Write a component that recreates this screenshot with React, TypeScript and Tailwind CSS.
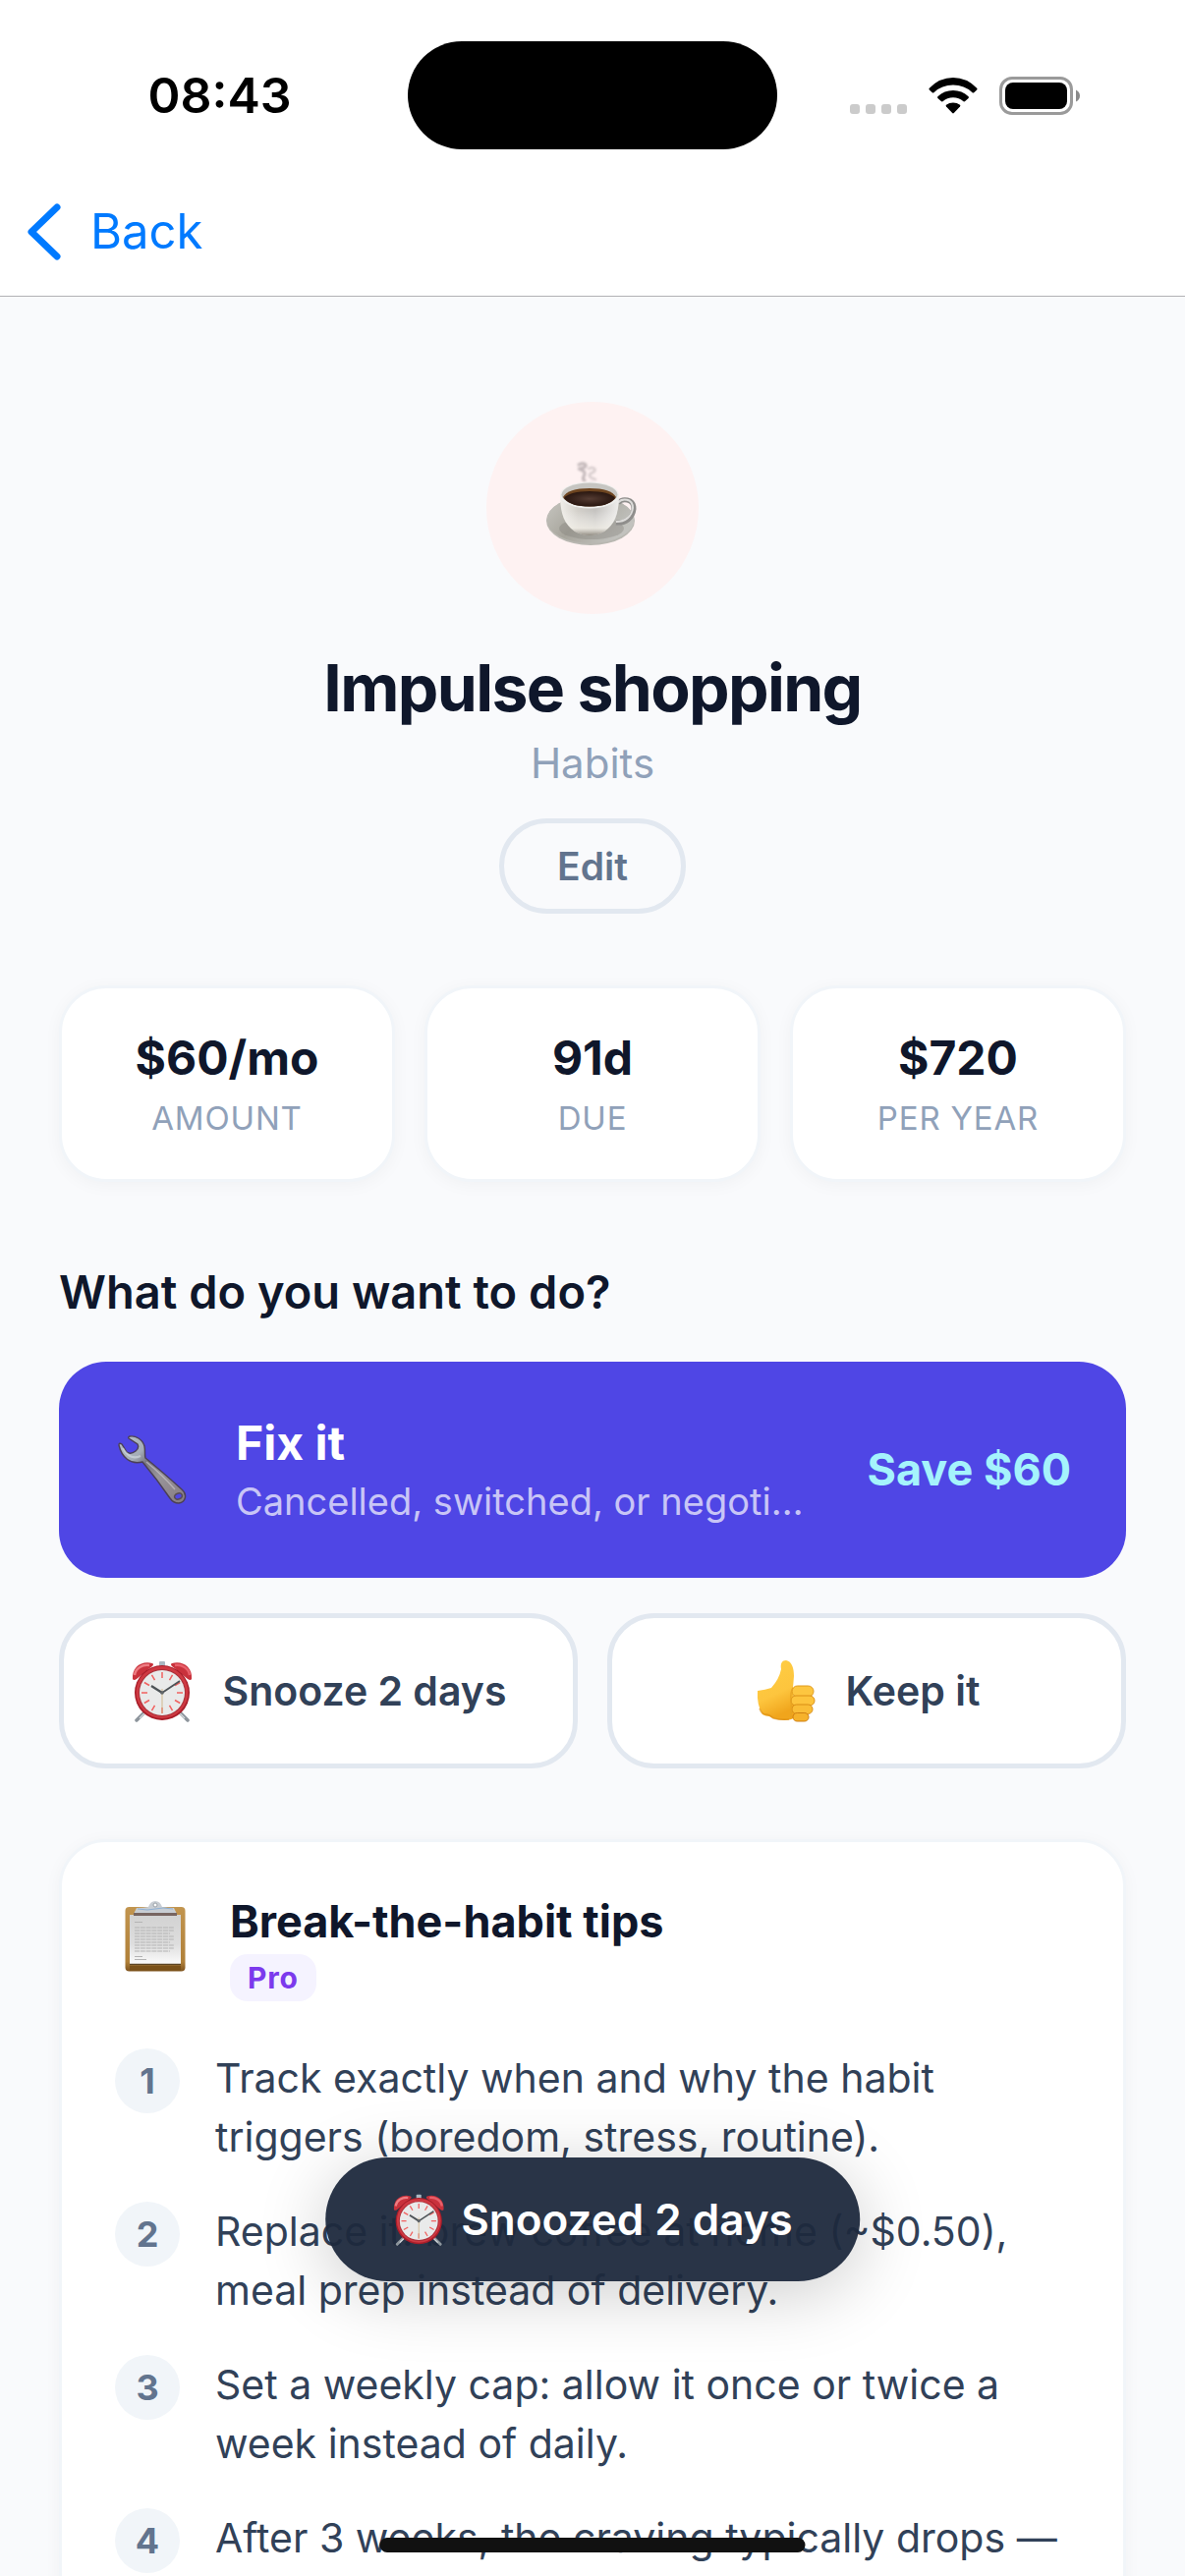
import React from "react";

const stats = [
  { value: "$60/mo", label: "AMOUNT" },
  { value: "91d", label: "DUE" },
  { value: "$720", label: "PER YEAR" },
];

const tips = [
  "Track exactly when and why the habit triggers (boredom, stress, routine).",
  "Replace it: brew coffee at home (~$0.50), meal prep instead of delivery.",
  "Set a weekly cap: allow it once or twice a week instead of daily.",
  "After 3 weeks, the craving typically drops —",
];

function SignalDots() {
  return (
    <svg className="mt-[27px] h-[10px] w-[58px]" viewBox="0 0 58 10" aria-hidden="true">
      {[0, 16, 32, 48].map((x) => (
        <rect key={x} x={x} width="10" height="10" rx="3" fill="#cbcbcb" />
      ))}
    </svg>
  );
}

function Wifi() {
  return (
    <svg className="h-[38px] w-[50px]" viewBox="0 0 50 38" aria-hidden="true">
      <path d="M0.8 11.8Q11 1 25 1T49.2 11.8Q50 12.6 49.2 13.4L46.2 16.2Q45.4 17 44.6 16.2Q36.500 8.600 25 8.600T5.400 16.200Q4.600 17 3.800 16.200L0.800 13.400Q0 12.600 0.800 11.800Z" />
      <path d="M9.400 20.300Q16 14 25 14T40.600 20.300Q41.400 21.100 40.600 21.900L37.200 25.100Q36.400 25.900 35.600 25.200Q31 21.200 25 21.200T14.400 25.200Q13.600 25.900 12.800 25.100L9.400 21.900Q8.600 21.100 9.400 20.300Z" />
      <path d="M18 28.800Q21 26.600 25 26.600T32 28.800Q32.800 29.600 32 30.500L25.800 37Q25 37.800 24.200 37L18 30.500Q17.200 29.600 18 28.800Z" />
    </svg>
  );
}

function Battery() {
  return (
    <svg className="h-[39px] w-[82px]" viewBox="0 0 82 39" aria-hidden="true">
      <rect x="1.500" y="1.500" width="72" height="36" rx="11.500" fill="none" stroke="#9a9a9a" strokeWidth="3" />
      <rect x="6" y="6" width="63" height="27" rx="8" />
      <path d="M78 13.500Q82 15.500 82 19.500T78 25.500Z" fill="#8a8a8a" />
    </svg>
  );
}

function Coffee() {
  return (
    <svg className="h-[90px] w-[92px] overflow-visible" viewBox="2 3 92 90" role="img" aria-label="Coffee">
      <defs>
        <linearGradient id="cup" x1="0" x2="1">
          <stop offset="0" stopColor="#f1efea" />
          <stop offset="0.300" stopColor="#d3d0ca" />
          <stop offset="0.600" stopColor="#c5c3c0" />
          <stop offset="1" stopColor="#efeeec" />
        </linearGradient>
        <linearGradient id="cupShade" x1="0" y1="0" x2="0" y2="1">
          <stop offset="0.400" stopColor="#ffffff" stopOpacity="0" />
          <stop offset="0.820" stopColor="#f5f2ea" stopOpacity="0.700" />
          <stop offset="1" stopColor="#8f8a80" />
        </linearGradient>
        <linearGradient id="saucer" x1="0" y1="0" x2="1" y2="0.500">
          <stop offset="0" stopColor="#c9c8c3" />
          <stop offset="0.500" stopColor="#a7a59c" />
          <stop offset="1" stopColor="#c2c2be" />
        </linearGradient>
        <radialGradient id="brew">
          <stop offset="0" stopColor="#553c33" />
          <stop offset="0.700" stopColor="#35211a" />
          <stop offset="1" stopColor="#2a1710" />
        </radialGradient>
        <filter id="steam" x="-30%" y="-30%" width="160%" height="160%">
          <feGaussianBlur stdDeviation="1.300" />
        </filter>
      </defs>
      <g filter="url(#steam)" fill="none" stroke="#a9a0a2" strokeLinecap="round">
        <path d="M34 4C40 1 44 5 39 7S32 7 38 10S35 18 40 20" strokeWidth="3" opacity="0.700" />
        <path d="M44 8C50 5 53 10 48 12S44 17 51 19" strokeWidth="2.500" opacity="0.450" />
        <path d="M47 22C44 28 50 29 47 37" strokeWidth="2" opacity="0.300" />
      </g>
      <ellipse cx="46" cy="61" rx="45" ry="25" fill="#b8b7b1" />
      <ellipse cx="46" cy="60" rx="44.500" ry="24" fill="url(#saucer)" />
      <ellipse cx="47" cy="69" rx="33" ry="11" fill="#817f77" opacity="0.350" />
      <path d="M74 43C78 38 90 38 90 49C89 58 82 64 72 63" fill="none" stroke="#8f8e8c" strokeWidth="5" />
      <path d="M74 42.500C78 38 89 38 89 48C88 57 81 62 72 62" fill="none" stroke="#dddcda" strokeWidth="2" />
      <path d="M15 34C15 51 18 64 30 72Q45 80 60 72C72 64 75 51 75 34Z" fill="url(#cup)" />
      <path d="M15 34C15 51 18 64 30 72Q45 80 60 72C72 64 75 51 75 34Z" fill="url(#cupShade)" />
      <ellipse cx="45" cy="35" rx="30" ry="13.500" fill="#efefed" />
      <ellipse cx="45" cy="34.500" rx="28.500" ry="12" fill="#c6c5c1" />
      <path d="M18 37Q23 28 45 28T72 37Q66 46.500 45 46.500T18 37Z" fill="#6e4520" />
      <path d="M19 38Q25 31 45 31T71 38Q65 46.500 45 46.500T19 38Z" fill="url(#brew)" />
    </svg>
  );
}

function Wrench() {
  return (
    <svg className="h-[72px] w-[72px] shrink-0" viewBox="0 0 72 72" aria-hidden="true">
      <defs>
        <linearGradient id="steel" x1="0" y1="0" x2="1" y2="1">
          <stop offset="0" stopColor="#b8c0c8" />
          <stop offset="0.280" stopColor="#a4adb7" />
          <stop offset="0.400" stopColor="#77757f" />
          <stop offset="0.600" stopColor="#98949b" />
          <stop offset="1" stopColor="#867b80" />
        </linearGradient>
      </defs>
      <path
        d="M12 2C18 1 25 5 27 12C28 17 27 20 28 24Q44 37 65 56C71 61 69 69 62 70C57 70 55 68 53 65Q40 46 25 28C13 31 4 24 1 11Q1 8 4 10L9 18Q13 21 18 17Q22 14 20 10L11 4Q10 3 12 2Z"
        fill="url(#steel)"
        stroke="#4b4055"
        strokeWidth="1.400"
      />
      <path d="M29 28Q46 42 58 56" fill="none" stroke="#c5c0c5" strokeWidth="1.500" opacity="0.700" />
      <path d="M5 14Q12 27 23 22" fill="none" stroke="#d5dde3" strokeWidth="2" opacity="0.600" />
      <ellipse cx="61.500" cy="63" rx="4" ry="3" fill="#4f46e5" stroke="#574c56" strokeWidth="1.500" transform="rotate(-20 61.500 63)" />
    </svg>
  );
}

function AlarmClock({ className }: { className: string }) {
  const ticks = [0, 30, 60, 90, 120, 150, 180, 210, 240, 270, 300, 330];
  return (
    <svg className={className} viewBox="0 0 64 64" aria-hidden="true">
      <path d="M15 53L6 62M49 53L58 62" stroke="#8c949b" strokeWidth="3.500" strokeLinecap="round" />
      <path d="M15 54L9 60M49 54L55 60" stroke="#d7dcdf" strokeWidth="1.300" />
      <rect x="29" y="2" width="6" height="8" rx="1" fill="#a9b7c1" />
      <path d="M12 14L18 20M52 14L46 20" stroke="#626871" strokeWidth="3" />
      <path d="M2 20C1 8 11 1 22 4Q24 5 22 7L6 20Q3 22 2 20Z" fill="#c9323c" />
      <path d="M62 20C63 8 53 1 42 4Q40 5 42 7L58 20Q61 22 62 20Z" fill="#c9323c" />
      <path d="M4 16C5 9 12 5 19 6" fill="none" stroke="#ee7c82" strokeWidth="2.500" />
      <path d="M60 16C59 9 52 5 45 6" fill="none" stroke="#e8606a" strokeWidth="2.500" />
      <circle cx="32" cy="34" r="28" fill="#a91d29" />
      <circle cx="32" cy="33.500" r="26.500" fill="#cf3942" />
      <circle cx="32" cy="34" r="24" fill="#a8323a" />
      <circle cx="32" cy="34" r="23" fill="#e9eaea" />
      {ticks.map((a) => (
        <path key={a} d="M32 13V19" stroke="#f0605f" strokeWidth="1.500" transform={`rotate(${a} 32 34)`} />
      ))}
      <path d="M32 30V55" stroke="#d2b98c" strokeWidth="1" />
      <path d="M32 34L21 27" stroke="#4d5357" strokeWidth="2.300" />
      <path d="M32 34L50 22" stroke="#4d5357" strokeWidth="1.800" />
      <circle cx="32" cy="34" r="1.800" fill="#62676a" />
    </svg>
  );
}

function ThumbsUp() {
  return (
    <svg className="h-[64px] w-[64px]" viewBox="0 0 64 64" aria-hidden="true">
      <defs>
        <linearGradient id="skin" x1="0" y1="0" x2="0.300" y2="1">
          <stop offset="0" stopColor="#ffce43" />
          <stop offset="0.650" stopColor="#fdc53e" />
          <stop offset="1" stopColor="#f0a51c" />
        </linearGradient>
      </defs>
      <path
        d="M4 32Q12 31 18 29Q26 20 28 10C27 4 29 1 33 1C39 2 41 9 41 17L40 29L42 58Q40 62 31 62Q20 61 16 58Q12 58 9 56Q3 46 4 32Z"
        fill="url(#skin)"
      />
      <path d="M6 50Q8 56 12 56Q16 56 20 60Q27 62 36 61" fill="none" stroke="#d98a12" strokeWidth="1.500" opacity="0.600" />
      <rect x="39" y="27" width="22" height="11" rx="5.500" fill="#fdc640" stroke="#e09a1b" strokeWidth="1" />
      <rect x="38" y="37" width="24" height="10" rx="5" fill="#fdc43d" stroke="#dc9117" strokeWidth="1" />
      <rect x="39" y="46" width="21" height="9.500" rx="4.700" fill="#fabd36" stroke="#d98d15" strokeWidth="1" />
      <rect x="40" y="54.500" width="16" height="8.500" rx="4.200" fill="#f6b22b" stroke="#cf7f10" strokeWidth="1" />
      <path d="M40 29Q37 34 38 42T38 59" fill="none" stroke="#e6a323" strokeWidth="1.500" opacity="0.800" />
    </svg>
  );
}

function Clipboard() {
  const lines = [27, 30, 33, 36, 39, 42, 45, 48, 51];
  return (
    <svg className="h-[72px] w-[62px]" viewBox="0 0 62 72" aria-hidden="true">
      <defs>
        <linearGradient id="sheet" x1="0" y1="0" x2="0" y2="1">
          <stop offset="0" stopColor="#d2d2d2" />
          <stop offset="0.600" stopColor="#dedede" />
          <stop offset="1" stopColor="#fbfbfb" />
        </linearGradient>
        <linearGradient id="board" x1="0" y1="0" x2="0" y2="1">
          <stop offset="0" stopColor="#c2954f" />
          <stop offset="0.850" stopColor="#b08039" />
          <stop offset="1" stopColor="#80551f" />
        </linearGradient>
      </defs>
      <rect x="0.500" y="6" width="61" height="65.500" rx="4" fill="url(#board)" />
      <path d="M5 66H57V71H5Z" fill="#7a5119" />
      <rect x="5" y="14" width="52" height="50" fill="url(#sheet)" />
      <path d="M5 64.500H57" stroke="#5d4524" strokeWidth="1.500" />
      <path d="M9 13L12 7Q19 7 24 6Q26 0 31 0T38 6Q43 7 50 7L53 13Z" fill="#c8cdd3" />
      <path d="M9 12H53V15H9Z" fill="#776561" />
      <path d="M13 8Q24 10 31 8T49 8" fill="none" stroke="#8fb0d3" strokeWidth="1" />
      <circle cx="31" cy="4" r="2" fill="#ffffff" stroke="#9aa0a6" strokeWidth="1" />
      <path d="M10 21.500H18M10 56.500H18M10 59.500H22" stroke="#b4b4b4" strokeWidth="1" />
      {lines.map((y, i) => (
        <path key={y} d={i % 3 === 2 ? `M10 ${y}H46` : `M10 ${y}H50`} stroke="#b4b4b4" strokeWidth="1.200" strokeDasharray="5 0.800" />
      ))}
    </svg>
  );
}

function Header() {
  return (
    <header className="relative z-10 shrink-0 border-b border-[#b2b2b4] bg-white">
      <div className="grid grid-cols-[1fr_376px_1fr] items-center pt-[42px]">
        <time className="pl-8 text-center text-[50px] leading-[60px] font-semibold text-black">08:43</time>
        <div className="h-[110px] rounded-full bg-black" />
        <div className="flex items-center gap-[22px] pl-[74px]">
          <SignalDots />
          <Wifi />
          <Battery />
        </div>
      </div>
      <nav className="flex px-7 pt-[54px] pb-[36px]">
        <button type="button" className="flex items-center gap-[30px] text-[49px] leading-[59px] text-[#007aff]">
          <svg className="h-[58px] w-[34px]" viewBox="0 0 34 58" aria-hidden="true">
            <path d="M30 4L4 29L30 54" fill="none" stroke="currentColor" strokeWidth="7" strokeLinecap="round" strokeLinejoin="round" />
          </svg>
          Back
        </button>
      </nav>
    </header>
  );
}

export default function App() {
  return (
    <div className="relative flex h-screen flex-col overflow-hidden bg-[#f9fafc] font-['Inter',sans-serif] text-slate-900">
      <Header />

      <main className="min-h-0 flex-1 overflow-hidden px-[60px] pt-[107px]">
        <section className="flex flex-col items-center">
          <div className="flex size-[216px] items-center justify-center rounded-full bg-[#fef2f2]">
            <Coffee />
          </div>
          <h1 className="mt-[35px] text-[66px] leading-[80px] font-bold tracking-tight">Impulse shopping</h1>
          <p className="mt-3 text-[42px] leading-[50px] text-slate-400">Habits</p>
          <button
            type="button"
            className="mt-[31px] rounded-full border-5 border-slate-200 px-[54px] py-5 text-[39px] leading-[47px] font-semibold text-slate-500"
          >
            Edit
          </button>
        </section>

        <dl className="mt-[73px] grid grid-cols-3 gap-[30px]">
          {stats.map((stat) => (
            <div
              key={stat.label}
              className="flex flex-col-reverse items-center gap-3 rounded-[48px] border-3 border-slate-100 bg-white py-[42px] shadow-[0_3px_18px_rgba(0,0,0,0.04)]"
            >
              <dt className="text-[33px] leading-[40px] tracking-wide text-slate-400">{stat.label}</dt>
              <dd className="text-[48px] leading-[58px] font-bold">{stat.value}</dd>
            </div>
          ))}
        </dl>

        <section>
          <h2 className="mt-[83px] text-[47px] leading-[58px] font-semibold">What do you want to do?</h2>
          <button
            type="button"
            className="mt-[42px] flex w-full items-center rounded-[48px] bg-[#4f46e5] py-[54px] pr-14 pl-[60px] text-left"
          >
            <Wrench />
            <span className="ml-12 block min-w-0 flex-1">
              <span className="block text-[48px] leading-[58px] font-bold text-white">Fix it</span>
              <span className="mt-[6px] block truncate text-[38px] leading-[48px] text-white/70">
                Cancelled, switched, or negotiated
              </span>
            </span>
            <span className="ml-12 text-[45px] leading-[54px] font-bold text-[#a5f3fc]">Save $60</span>
          </button>
          <div className="mt-9 grid grid-cols-2 gap-[30px] text-[41px] leading-[52px] font-semibold text-slate-700">
            <button type="button" className="flex h-[158px] items-center justify-center gap-[30px] rounded-[48px] border-5 border-slate-200 bg-white">
              <AlarmClock className="size-[64px]" />
              Snooze 2 days
            </button>
            <button type="button" className="flex h-[158px] items-center justify-center gap-[30px] rounded-[48px] border-5 border-slate-200 bg-white">
              <ThumbsUp />
              Keep it
            </button>
          </div>
        </section>

        <section className="mt-[72px] rounded-[48px] border-3 border-slate-100 bg-white p-[54px] shadow-[0_3px_18px_rgba(0,0,0,0.04)]">
          <div className="flex gap-9">
            <div className="flex h-[84px] w-[81px] items-center justify-center">
              <Clipboard />
            </div>
            <div>
              <h2 className="text-[45px] leading-[54px] font-bold">Break-the-habit tips</h2>
              <span className="mt-[6px] block w-fit rounded-[18px] bg-violet-50 px-[18px] py-[6px] text-[30px] leading-[36px] font-bold tracking-wide text-[#7c3aed]">
                Pro
              </span>
            </div>
          </div>
          <ol className="mt-12 flex flex-col gap-9">
            {tips.map((tip, i) => (
              <li key={tip} className="flex gap-9">
                <span className="flex size-[66px] shrink-0 items-center justify-center rounded-full bg-slate-100 text-[36px] leading-[44px] font-bold text-slate-500">
                  {i + 1}
                </span>
                <p className="text-[41px] leading-[60px] text-slate-700">{tip}</p>
              </li>
            ))}
          </ol>
        </section>
      </main>

      <div
        role="status"
        className="absolute bottom-[300px] left-1/2 flex -translate-x-1/2 items-center gap-4 rounded-full bg-slate-800/95 px-[68px] py-9 text-[44px] leading-[54px] font-semibold whitespace-nowrap text-white shadow-[0_12px_72px_rgba(0,0,0,0.2)]"
      >
        <AlarmClock className="size-[54px]" />
        Snoozed 2 days
      </div>
      <div className="absolute bottom-6 left-1/2 h-[15px] w-[433px] -translate-x-1/2 rounded-full bg-[#111111]" />
    </div>
  );
}
